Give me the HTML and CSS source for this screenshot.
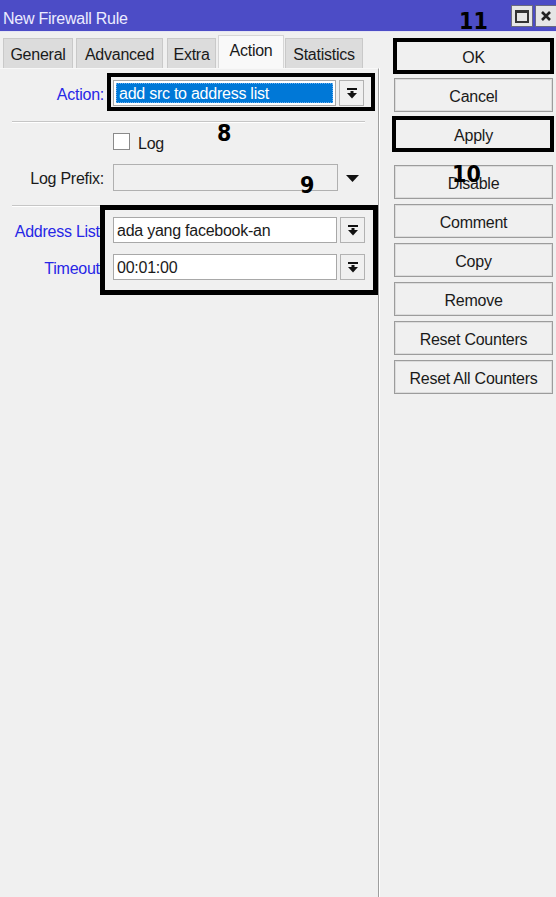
FILE: index.html
```html
<!DOCTYPE html>
<html>
<head>
<meta charset="utf-8">
<link rel="stylesheet" href="styles.css">
</head>
<body>
<div class="window">
  <div class="titlebar">
    <span class="title">New Firewall Rule</span>
    <div class="tb-buttons">
      <span class="tb-btn"><span class="max-glyph"></span></span>
      <span class="tb-btn close"><svg width="12" height="12" viewBox="0 0 12 12"><path d="M2 2 L10 10 M10 2 L2 10" stroke="#222" stroke-width="2.6"/></svg></span>
    </div>
  </div>
  <div class="content">
    <div class="left">
      <div class="tabs">
        <span class="tab t-general">General</span>
        <span class="tab t-advanced">Advanced</span>
        <span class="tab t-extra">Extra</span>
        <span class="tab active t-action">Action</span>
        <span class="tab t-stats">Statistics</span>
      </div>
      <div class="panel">
        <div class="row r-action">
          <span class="label blue">Action:</span>
          <span class="field selected"><span class="sel">add src to address list</span></span>
          <span class="dd"><svg width="10" height="11" viewBox="0 0 10 11"><rect x="0" y="0" width="10" height="2" fill="#111"/><rect x="3.5" y="3" width="3" height="2.5" fill="#111"/><polygon points="0,5 10,5 5,10.5" fill="#111"/></svg></span>
        </div>
        <div class="sep s1"></div>
        <div class="row r-log">
          <span class="label"></span>
          <span class="checkbox"></span>
          <span class="cb-label">Log</span>
        </div>
        <div class="row r-prefix">
          <span class="label">Log Prefix:</span>
          <span class="field disabled wide"></span>
          <span class="tri"><svg width="13" height="7" viewBox="0 0 13 7"><polygon points="0,0 13,0 6.5,7" fill="#111"/></svg></span>
        </div>
        <div class="sep s2"></div>
        <div class="row r-addr">
          <span class="label blue">Address List:</span>
          <span class="field">ada yang facebook-an</span>
          <span class="dd"><svg width="10" height="11" viewBox="0 0 10 11"><rect x="0" y="0" width="10" height="2" fill="#111"/><rect x="3.5" y="3" width="3" height="2.5" fill="#111"/><polygon points="0,5 10,5 5,10.5" fill="#111"/></svg></span>
        </div>
        <div class="row r-timeout">
          <span class="label blue">Timeout:</span>
          <span class="field">00:01:00</span>
          <span class="dd"><svg width="10" height="11" viewBox="0 0 10 11"><rect x="0" y="0" width="10" height="2" fill="#111"/><rect x="3.5" y="3" width="3" height="2.5" fill="#111"/><polygon points="0,5 10,5 5,10.5" fill="#111"/></svg></span>
        </div>
      </div>
    </div>
    <div class="right">
      <button class="btn">OK</button>
      <button class="btn">Cancel</button>
      <button class="btn">Apply</button>
      <button class="btn b-disable">Disable</button>
      <button class="btn">Comment</button>
      <button class="btn">Copy</button>
      <button class="btn">Remove</button>
      <button class="btn">Reset Counters</button>
      <button class="btn">Reset All Counters</button>
    </div>
  </div>

  <div class="mark box-ok"></div>
  <div class="mark box-apply"></div>
  <div class="mark box-action"></div>
  <div class="mark box-addr"></div>
  <span class="num n11">11</span>
  <span class="num n8">8</span>
  <span class="num n9">9</span>
  <span class="num n10">10</span>
</div>
</body>
</html>
```

FILE: styles.css
```css
* { box-sizing: border-box; }
html, body { margin: 0; padding: 0; }
body {
  background: #f0f0f0;
  font-family: "Liberation Sans", Arial, sans-serif;
  font-size: 16px;
  letter-spacing: -0.25px;
  color: #1a1a1a;
}
.window {
  position: relative;
  width: 556px;
  height: 897px;
  display: flex;
  flex-direction: column;
  overflow: hidden;
}
.titlebar {
  height: 32px;
  background: #4c4cc6;
  border-bottom: 1px solid #e4e4f4;
  display: flex;
  align-items: flex-start;
  justify-content: space-between;
  padding-left: 3px;
  flex: none;
}
.title {
  color: #ececff;
  font-size: 16px;
  line-height: 18px;
  margin-top: 10px;
}
.tb-buttons {
  display: flex;
  gap: 2px;
  margin-top: 5px;
}
.tb-btn {
  width: 22px;
  height: 22px;
  background: #e6e6e6;
  border: 1px solid #6a6a80;
  display: flex;
  align-items: center;
  justify-content: center;
}
.tb-btn.close { width: 21px; border-right: none; }
.max-glyph {
  width: 14px;
  height: 13px;
  border: 2px solid #333;
  border-top-width: 3px;
}
.content {
  flex: 1;
  display: flex;
}
.left {
  width: 379px;
  display: flex;
  flex-direction: column;
  flex: none;
}
.tabs {
  height: 36px;
  display: flex;
  align-items: flex-end;
  padding-left: 3px;
}
.tab {
  height: 30px;
  background: #dcdcdc;
  border: 1px solid #c9c9c9;
  border-bottom: none;
  display: flex;
  align-items: center;
  justify-content: center;
  color: #1a1a1a;
  padding-top: 2px;
}
.t-general { width: 70px; }
.t-advanced { width: 87px; margin-left: 3px; }
.t-extra { width: 49px; margin-left: 4px; }
.t-action { width: 66px; margin-left: 2px; }
.t-stats { width: 78px; margin-left: 1px; }
.tab.active {
  height: 33px;
  background: #f9f9f9;
  border-color: #d6d6d6;
  padding-top: 0;
  padding-bottom: 2px;
}
.panel {
  flex: 1;
  border-right: 1px solid #9e9e9e;
  box-shadow: 1px 0 0 #ffffff;
  border-top: 1px solid #f8f8f8;
}
.row {
  display: flex;
  align-items: center;
}
.label {
  width: 104px;
  text-align: right;
  flex: none;
  white-space: nowrap;
  color: #1a1a1a;
  padding-top: 3px;
}
.label.blue { color: #2727e6; }
.field {
  margin-left: 9px;
  width: 224px;
  height: 26px;
  background: #ffffff;
  border: 1px solid #a8a8a8;
  display: flex;
  align-items: center;
  padding-left: 3px;
  padding-top: 2px;
  white-space: nowrap;
  flex: none;
}
.field.selected {
  padding: 2px;
  width: 223px;
}
.sel {
  flex: 1;
  height: 100%;
  background: #0078d7;
  color: #ffffff;
  display: flex;
  align-items: center;
  padding-left: 2px;
  padding-top: 2px;
  border: 1px dotted #6ab0f0;
}
.field.disabled {
  background: #f0f0f0;
  border-color: #b0b0b0;
  width: 225px;
  height: 27px;
}
.dd {
  margin-left: 3px;
  width: 25px;
  height: 26px;
  border: 1px solid #b2b2b2;
  background: #f0f0f0;
  display: flex;
  align-items: center;
  justify-content: center;
  flex: none;
}
.tri {
  margin-left: 8px;
  display: flex;
  margin-top: 2px;
}
.sep {
  margin: 0 12px;
  height: 2px;
  border-top: 1px solid #c6c6c6;
  border-bottom: 1px solid #ffffff;
}
.r-action { margin-top: 11px; }
.s1 { margin-top: 15px; width: 353px; }
.r-log { margin-top: 10px; height: 17px; }
.checkbox {
  margin-left: 9px;
  width: 17px;
  height: 17px;
  background: #ffffff;
  border: 1px solid #8a8a8a;
}
.cb-label { margin-left: 8px; padding-top: 5px; }
.r-prefix { margin-top: 14px; }
.s2 { margin-top: 14px; }
.r-addr { margin-top: 10px; }
.r-timeout { margin-top: 11px; }
.right {
  flex: 1;
  display: flex;
  flex-direction: column;
  gap: 5px;
  padding: 7px 3px 0 15px;
}
.btn {
  width: 159px;
  height: 34px;
  background: #f0f0f0;
  border: 1px solid #9c9c9c;
  box-shadow: inset 0 0 0 1px #dcdcdc;
  font-family: "Liberation Sans", Arial, sans-serif;
  font-size: 16px;
  letter-spacing: -0.25px;
  color: #1a1a1a;
  padding: 3px 0 0 0;
}
.b-disable { margin-top: 9px; }
.mark {
  position: absolute;
  border: 4px solid #000;
}
.box-ok { left: 393px; top: 38px; width: 161px; height: 36px; }
.box-apply { left: 392px; top: 116px; width: 162px; height: 36px; }
.box-action { left: 107px; top: 73px; width: 268px; height: 38px; }
.box-addr { left: 100px; top: 205px; width: 278px; height: 90px; border-width: 5px; }
.num {
  position: absolute;
  font-family: "DejaVu Sans Condensed", "DejaVu Sans", sans-serif;
  font-weight: bold;
  font-size: 23px;
  letter-spacing: 0;
  color: #000;
  line-height: 1;
}
.n11 { left: 459px; top: 10px; }
.n8 { left: 217px; top: 122px; }
.n9 { left: 300px; top: 174px; }
.n10 { left: 452px; top: 163px; }
```
